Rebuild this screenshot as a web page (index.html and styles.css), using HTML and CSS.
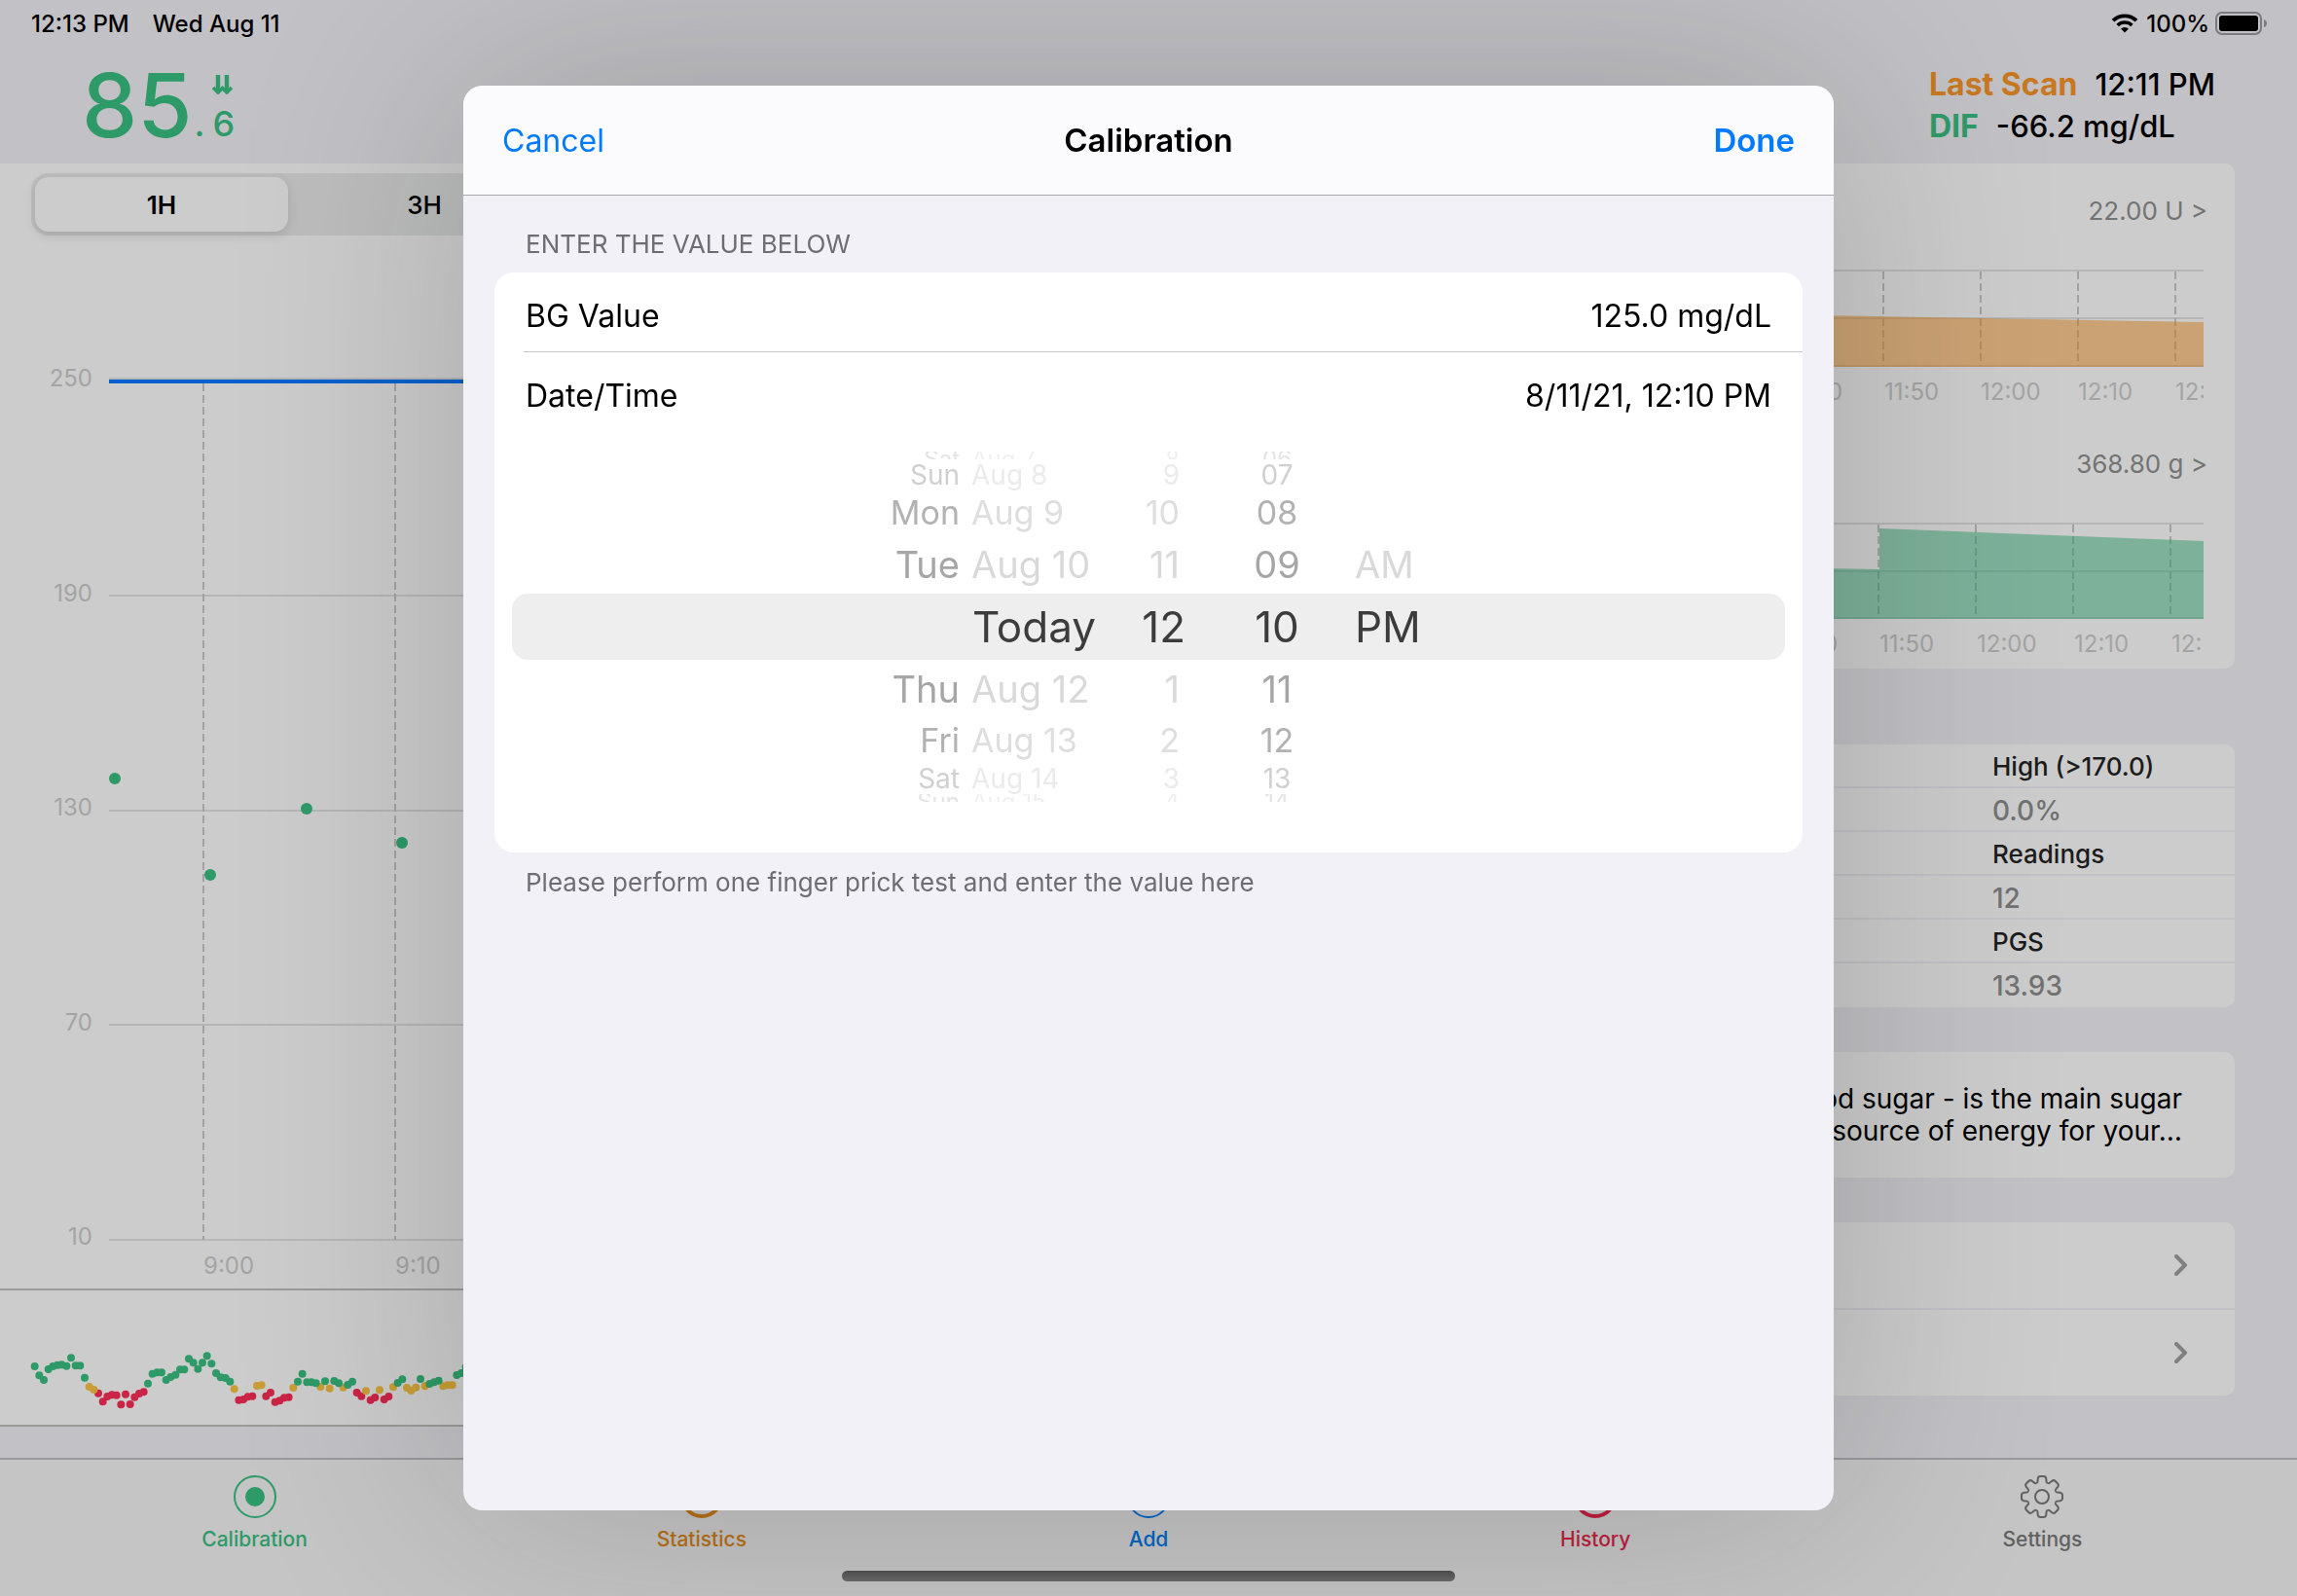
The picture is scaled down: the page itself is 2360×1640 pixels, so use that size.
FILE: index.html
```html
<!DOCTYPE html>
<html lang="en">
<head>
<meta charset="utf-8">
<meta name="viewport" content="width=device-width, initial-scale=1">
<title>Calibration</title>
<link rel="stylesheet" href="styles.css">
</head>
<body>
<div class="app">
  <header class="top">
    <div class="status">
      <span>12:13 PM</span>
      <span class="status-date">Wed Aug 11</span>
      <svg class="wifi" viewBox="0 0 28 20" aria-hidden="true">
        <path d="M2 7.2a17.4 17.4 0 0 1 24 0" fill="none" stroke="#000" stroke-width="3.8"/>
        <path d="M6.6 12a10.8 10.8 0 0 1 14.800 0" fill="none" stroke="#000" stroke-width="3.600"/>
        <path d="M14 19.600l-4-4a5.800 5.800 0 0 1 8 0z"/>
      </svg>
      <span>100%</span>
      <svg class="battery" viewBox="0 0 54 24" aria-hidden="true">
        <rect x="1" y="1" width="46" height="22" rx="6" fill="none" stroke="#7c7c7f" stroke-width="2"/>
        <rect x="4" y="4" width="40" height="16" rx="3"/>
        <path d="M50 8q3 1 3 4t-3 4z" fill="#7c7c7f"/>
      </svg>
    </div>
    <div class="summary">
      <div class="reading">
        <span class="reading-main">85</span>
        <span class="reading-dot">.</span>
        <span class="reading-side">
          <svg class="trend" viewBox="0 0 22 20" aria-hidden="true">
            <path d="M6 0v17M15 0v17" fill="none" stroke="#2e9a68" stroke-width="4.400"/>
            <path d="M1 13l5 5 4.500-4.500 4.500 4.500 5-5" fill="none" stroke="#2e9a68" stroke-width="3.600"/>
          </svg>
          <span>6</span>
        </span>
      </div>
      <dl class="scan">
        <div><dt class="amber">Last Scan</dt><dd>12:11 PM</dd></div>
        <div><dt class="green">DIF</dt><dd>-66.2 mg/dL</dd></div>
      </dl>
    </div>
  </header>

  <main class="columns">
    <section class="panel">
      <div class="segments">
        <button type="button" class="segment segment-on">1H</button>
        <button type="button" class="segment">3H</button>
      </div>
      <svg class="chart" aria-label="Glucose">
        <g class="grid">
          <path d="M112 147H1384M112 370H1384M112 591H1384M112 811H1384M112 1032H1384"/>
          <path class="dash" d="M209 152V1032M406 152V1032"/>
        </g>
        <path d="M112 150H1384" stroke="#0062cf" stroke-width="4"/>
        <g class="axis" text-anchor="end">
          <text x="95" y="155">250</text>
          <text x="95" y="376">190</text>
          <text x="95" y="596">130</text>
          <text x="95" y="817">70</text>
          <text x="95" y="1037">10</text>
        </g>
        <g class="axis">
          <text x="209" y="1067">9:00</text>
          <text x="406" y="1067">9:10</text>
        </g>
        <g fill="#2e9a68">
          <circle cx="118" cy="558" r="6"/>
          <circle cx="216" cy="657" r="6"/>
          <circle cx="315" cy="589" r="6"/>
          <circle cx="413" cy="624" r="6"/>
        </g>
      </svg>
      <div class="overview">
        <svg class="overview-chart" viewBox="0 288 1446 414" aria-hidden="true">
          <path class="low" d="M303 605h0M317 631h0M331 615h0M345 610h0M359 611h0M373 640h0M387 608h0M401 639h0M415 617h0M429 606h0M443 601h0M736 626h0M750 624h0M764 616h0M778 614h0M820 614h0M834 603h0M848 632h0M862 628h0M876 619h0M890 617h0M1100 603h0M1114 614h0M1142 626h0M1156 618h0M1184 624h0M1198 615h0"/>
          <path class="mid" d="M275 585h0M289 594h0M722 592h0M792 582h0M806 580h0M904 588h0M988 585h0M1016 590h0M1058 587h0M1128 598h0M1170 595h0M1212 586h0M1254 588h0M1267 597h0M1282 587h0M1310 583h0M1366 583h0M1380 580h0M1394 580h0"/>
          <path class="good" d="M107 522h0M121 550h0M135 564h0M149 531h0M163 522h0M177 518h0M190 517h0M205 521h0M219 496h0M233 520h0M247 520h0M261 557h0M456 575h0M470 545h0M484 541h0M498 541h0M512 564h0M526 555h0M541 548h0M555 532h0M568 532h0M582 499h0M596 511h0M610 530h0M624 511h0M638 490h0M652 514h0M666 543h0M680 556h0M695 558h0M709 569h0M918 569h0M932 545h0M946 571h0M960 571h0M974 574h0M1002 568h0M1030 567h0M1044 574h0M1072 579h0M1086 569h0M1226 573h0M1240 562h0M1296 561h0M1324 576h0M1338 571h0M1352 566h0M1408 549h0M1422 543h0M1436 524h0"/>
        </svg>
      </div>
    </section>

    <section class="cards">
      <div class="card trends">
        <a class="more" href="#insulin">22.00 U &gt;</a>
        <svg class="mini" viewBox="0 0 784 142">
          <g class="grid">
            <path d="M0 1H784M0 50H784M0 99H784"/>
            <path class="dash" d="M455 2V99M555 2V99M655 2V99M755 2V99"/>
          </g>
          <path d="M390 47L784 54V100H390z" fill="#ca7719" fill-opacity=".5"/>
          <g class="axis">
            <text x="356" y="134">11:40</text>
            <text x="456" y="134">11:50</text>
            <text x="555" y="134">12:00</text>
            <text x="655" y="134">12:10</text>
            <text x="755" y="134">12:20</text>
          </g>
        </svg>
        <a class="more" href="#carbs">368.80 g &gt;</a>
        <svg class="mini" viewBox="0 0 784 142">
          <g class="grid">
            <path d="M0 1H784M0 50H784M0 98H784"/>
            <path class="dash" d="M450 2V98M550 2V98M650 2V98M750 2V98"/>
          </g>
          <path d="M390 47L451 48V6L784 19V99H390z" fill="#2e9668" fill-opacity=".5"/>
          <g class="axis">
            <text x="351" y="133">11:40</text>
            <text x="451" y="133">11:50</text>
            <text x="551" y="133">12:00</text>
            <text x="651" y="133">12:10</text>
            <text x="751" y="133">12:20</text>
          </g>
        </svg>
      </div>
      <dl class="card stats">
        <dt>High (&gt;170.0)</dt><dd>0.0%</dd>
        <dt>Readings</dt><dd>12</dd>
        <dt>PGS</dt><dd>13.93</dd>
      </dl>
      <p class="card about">blood sugar - is the main sugar<br>main source of energy for your…</p>
      <div class="card links">
        <a href="#more" aria-label="Open"><svg class="chevron" viewBox="0 0 14 22"><path d="M2 2l9 9-9 9"/></svg></a>
        <a href="#more" aria-label="Open"><svg class="chevron" viewBox="0 0 14 22"><path d="M2 2l9 9-9 9"/></svg></a>
      </div>
    </section>
  </main>

  <nav class="tabs">
    <a class="tab green" href="#calibration">
      <svg viewBox="0 0 44 44"><circle class="ring" cx="22" cy="22" r="21"/><circle cx="22" cy="22" r="10" fill="currentColor"/></svg>
      Calibration
    </a>
    <a class="tab orange" href="#statistics">
      <svg viewBox="0 0 44 44"><circle class="ring ring-bold" cx="22" cy="22" r="20"/></svg>
      Statistics
    </a>
    <a class="tab blue" href="#add">
      <svg viewBox="0 0 44 44"><circle class="ring" cx="22" cy="22" r="21"/></svg>
      Add
    </a>
    <a class="tab red" href="#history">
      <svg viewBox="0 0 44 44"><circle class="ring ring-bold" cx="22" cy="22" r="20"/></svg>
      History
    </a>
    <a class="tab gray" href="#settings">
      <svg viewBox="-22 -22 44 44">
        <defs><path id="tooth" d="M-5.900-14.300Q-4.600-14.200-4.500-16L-4.300-18.400Q-4-21-1.600-21H1.600Q4-21 4.300-18.400L4.500-16Q4.600-14.200 5.900-14.300"/></defs>
        <g class="ring">
          <use href="#tooth"/><use href="#tooth" transform="rotate(45)"/><use href="#tooth" transform="rotate(90)"/><use href="#tooth" transform="rotate(135)"/><use href="#tooth" transform="rotate(180)"/><use href="#tooth" transform="rotate(225)"/><use href="#tooth" transform="rotate(270)"/><use href="#tooth" transform="rotate(315)"/>
          <circle r="7"/>
        </g>
      </svg>
      Settings
    </a>
  </nav>
</div>

<div class="overlay">
  <form class="sheet" role="dialog" aria-labelledby="sheet-title">
    <header class="sheet-bar">
      <button type="button" class="cancel">Cancel</button>
      <h1 id="sheet-title">Calibration</h1>
      <button type="button" class="done">Done</button>
    </header>
    <div class="sheet-body">
      <h2>ENTER THE VALUE BELOW</h2>
      <div class="fields">
        <div class="field field-lined">
          <label for="bg">BG Value</label>
          <input id="bg" type="text" value="125.0 mg/dL">
        </div>
        <div class="field">
          <label for="when">Date/Time</label>
          <input id="when" type="text" value="8/11/21, 12:10 PM">
        </div>
        <div class="wheel">
          <div class="row edge edge-top"><b>Sat</b><span>Aug 7</span><i>8</i><em>06</em></div>
          <div class="row far"><b>Sun</b><span>Aug 8</span><i>9</i><em>07</em></div>
          <div class="row mid-far"><b>Mon</b><span>Aug 9</span><i>10</i><em>08</em></div>
          <div class="row near"><b>Tue</b><span>Aug 10</span><i>11</i><em>09</em><u>AM</u></div>
          <div class="row current"><b class="today">Today</b><i>12</i><em>10</em><u>PM</u></div>
          <div class="row near"><b>Thu</b><span>Aug 12</span><i>1</i><em>11</em></div>
          <div class="row mid-far"><b>Fri</b><span>Aug 13</span><i>2</i><em>12</em></div>
          <div class="row far"><b>Sat</b><span>Aug 14</span><i>3</i><em>13</em></div>
          <div class="row edge"><b>Sun</b><span>Aug 15</span><i>4</i><em>14</em></div>
        </div>
      </div>
      <p class="hint">Please perform one finger prick test and enter the value here</p>
    </div>
  </form>
  <div class="home-bar"></div>
</div>
</body>
</html>
```

FILE: styles.css
```css
* { box-sizing: border-box; }

body {
  margin: 0;
  font-family: Inter, "Liberation Sans", sans-serif;
  color: #000;
  background: #c2c1c6;
}

button, input {
  font: inherit;
  color: inherit;
  background: none;
  border: 0;
  padding: 0;
}

a { color: inherit; text-decoration: none; }
dl, dd, p, h1, h2 { margin: 0; }
svg { display: block; }

.green { color: #2e9a68; }
.amber { color: #c87820; }
.orange { color: #b86f18; }
.blue { color: #0064c8; }
.red { color: #c01e3e; }
.gray { color: #616161; }

.app {
  display: flex;
  flex-direction: column;
  min-height: 100vh;
}

/* Status bar and summary */
.status {
  display: flex;
  align-items: center;
  height: 48px;
  padding: 0 30px 0 32px;
  font-size: 24px;
  font-weight: 500;
}
.status-date { margin-left: 24px; }
.wifi { width: 28px; height: 20px; margin: 0 8px 0 auto; }
.battery { width: 54px; height: 24px; margin-left: 6px; }

.summary {
  display: flex;
  justify-content: space-between;
  align-items: center;
  height: 120px;
  padding: 0 84px;
}
.reading {
  display: flex;
  align-items: flex-end;
  color: #2e9a68;
}
.reading-main { font-size: 91px; line-height: 82px; font-weight: 500; }
.reading-dot { font-size: 36px; line-height: 44px; font-weight: 500; margin-left: 2px; }
.reading-side {
  display: flex;
  flex-direction: column;
  margin-left: 8px;
  font-size: 36px;
  line-height: 44px;
  font-weight: 500;
}
.trend { width: 22px; height: 20px; margin-bottom: 8px; }
.scan { font-size: 31px; line-height: 43px; font-weight: 500; }
.scan div { display: flex; gap: 18px; }
.scan dt { font-size: 32px; font-weight: 700; }

/* Main columns */
.columns {
  flex: 1;
  display: grid;
  grid-template-columns: minmax(0, 1fr) 848px;
  gap: 32px;
  padding-right: 64px;
}

.panel {
  margin-bottom: 32px;
  padding-top: 10px;
  background: #ccc;
}
.segments {
  display: flex;
  height: 64px;
  margin: 0 32px;
  padding: 4px;
  border-radius: 18px;
  background: #bdbdbe;
}
.segment {
  width: 270px;
  font-size: 26px;
  font-weight: 500;
}
.segment-on {
  width: 260px;
  margin-right: 5px;
  border-radius: 14px;
  background: #ccc;
  font-weight: 600;
  box-shadow: 0 4px 12px rgba(0, 0, 0, .12);
}
.chart { width: 100%; height: 1082px; }
.grid { fill: none; stroke: #b6b6b6; stroke-width: 2; }
.dash { stroke: #a2a2a2; stroke-dasharray: 8 4; }
.axis { font-size: 24px; fill: #a4a4a4; }
.overview {
  border-top: 2px solid #9a9a9a;
  border-bottom: 2px solid #9a9a9a;
}
.overview-chart { width: 482px; height: 138px; }
.overview-chart path { fill: none; stroke-width: 24; stroke-linecap: round; }
.low { stroke: #cb2546; }
.mid { stroke: #c99e36; }
.good { stroke: #2e9a68; }

.cards {
  display: flex;
  flex-direction: column;
  gap: 46px;
}
.card { border-radius: 10px; background: #ccc; }
.trends { padding: 33px 32px 0; height: 519px; margin-bottom: 32px; }
.more {
  display: block;
  margin-right: -4px;
  text-align: right;
  font-size: 26px;
  line-height: 32px;
  color: #737373;
  padding-bottom: 44px;
}
.mini { width: 100%; margin-bottom: 42px; overflow: hidden; }

.stats { font-weight: 500; overflow: hidden; }
.stats dt, .stats dd {
  height: 45px;
  padding-left: 599px;
  border-bottom: 2px solid #c2c1c6;
  font-size: 26px;
  line-height: 46px;
  color: #1c1c1c;
}
.stats dd { font-size: 28px; color: #727272; }
.stats dd:last-child { border-bottom: 0; }

.about {
  padding: 32px 54px 31px;
  text-align: right;
  font-size: 28px;
  line-height: 33px;
}
.links a {
  display: flex;
  align-items: center;
  justify-content: flex-end;
  height: 88px;
  padding-right: 48px;
}
.links a + a { height: 90px; border-top: 2px solid #c2c1c6; }
.chevron { width: 14px; height: 22px; }
.chevron path {
  fill: none;
  stroke: #808080;
  stroke-width: 4;
  stroke-linecap: round;
  stroke-linejoin: round;
}

/* Tab bar */
.tabs {
  display: flex;
  height: 142px;
  padding: 16px 32px 0;
  border-top: 2px solid #9a9a9c;
  background: #c5c5c5;
}
.tab {
  flex: 1;
  display: flex;
  flex-direction: column;
  align-items: center;
  gap: 10px;
  font-size: 21px;
  line-height: 24px;
  font-weight: 500;
}
.tab svg { width: 44px; height: 44px; }
.ring { fill: none; stroke: currentColor; stroke-width: 2; }
.ring-bold { stroke-width: 4; }

/* Calibration sheet */
.overlay {
  position: fixed;
  inset: 0;
  display: flex;
  align-items: center;
  justify-content: center;
  overflow: hidden;
}
.sheet {
  width: 1408px;
  max-width: 100%;
  height: calc(100vh - 176px);
  border-radius: 20px;
  background: #f2f1f7;
  box-shadow: 0 0 240px rgba(0, 20, 0, .2);
}
.sheet-bar {
  display: flex;
  align-items: center;
  justify-content: space-between;
  height: 113px;
  padding: 0 40px;
  border-bottom: 1px solid #a7a7aa;
  border-radius: 20px 20px 0 0;
  background: #fbfbfd;
  font-size: 32px;
}
.sheet-bar h1 { font-size: 33px; font-weight: 600; }
.cancel, .done { flex: 1; color: #007aff; text-align: left; }
.done { font-size: 33px; text-align: right; font-weight: 600; }
.sheet-body { padding: 34px 32px 0; }
.sheet-body h2, .hint {
  padding-left: 32px;
  font-size: 26px;
  line-height: 32px;
  font-weight: 400;
  color: #6d6d72;
}
.fields {
  margin: 13px 0 15px;
  padding-bottom: 52px;
  border-radius: 20px;
  background: #fff;
}
.field {
  display: flex;
  align-items: center;
  justify-content: space-between;
  height: 88px;
  margin-left: 30px;
  padding: 0 32px 0 2px;
  font-size: 32px;
}
.field-lined {
  height: 82px;
  padding-top: 7px;
  border-bottom: 1px solid #c6c6c8;
}
.field input { text-align: right; }

.wheel { margin: 14px 18px 0; }
.row {
  display: grid;
  grid-template-columns: 132px 140px 92px 122px 166px;
  justify-content: center;
  align-items: center;
  overflow: hidden;
}
.row b, .row i, .row em, .row u {
  font-weight: 400;
  font-style: normal;
  text-decoration: none;
}
.row b, .row i { text-align: right; }
.row em { padding-left: 66px; text-align: center; }
.row span { padding-left: 12px; }
.row u { padding-left: 52px; }
.row .today { grid-column: span 2; }
.current {
  height: 68px;
  border-radius: 16px;
  background: #eee;
  color: #3c3c3c;
  font-size: 44px;
}
.near { height: 60px; font-size: 38px; line-height: 60px; color: #d9d9d9; }
.near b, .near em { color: #a6a6a6; }
.near i, .mid-far i, .far i, .edge i { padding-right: 6px; }
.mid-far { height: 46px; font-size: 34px; line-height: 46px; color: #dedede; }
.mid-far b, .mid-far em { color: #b2b2b2; }
.far { height: 32px; font-size: 28px; line-height: 32px; color: #ebebeb; }
.far b, .far em { color: #d0d0d0; }
.edge { height: 8px; align-items: start; font-size: 24px; line-height: 16px; color: #f0f0f0; }
.edge-top { align-items: end; }
.edge b, .edge em { color: #e4e4e4; }

.home-bar {
  position: absolute;
  bottom: 15px;
  width: 630px;
  height: 11px;
  border-radius: 6px;
  background: linear-gradient(#4c4c4c, #666);
}
```
